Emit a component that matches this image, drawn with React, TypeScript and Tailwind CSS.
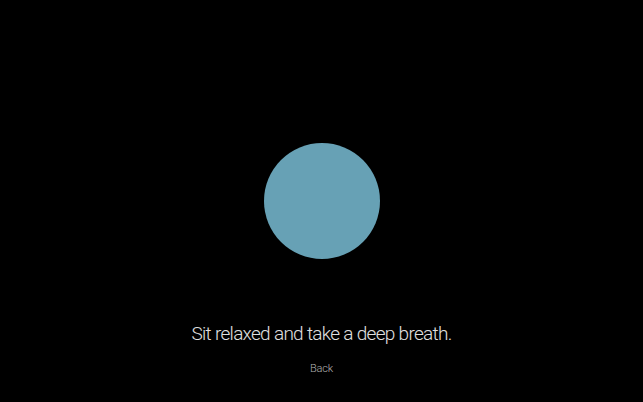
export default function App() {
  return (
    <div
      className="flex h-[402px] w-full flex-col items-center bg-black pt-[143px]"
      style={{ fontFamily: "Roboto, 'Noto Sans', sans-serif" }}
    >
      <div className="h-[116px] w-[116px] rounded-full bg-[#67a1b5]" />
      <p className="mt-[61px] text-[19px] leading-[28px] font-light tracking-[-0.7px] text-[#e0e0e0]">
        Sit relaxed and take a deep breath.
      </p>
      <button className="mt-[13px] text-[11px] leading-[16px] font-light tracking-[-0.2px] text-[#b0b0b0]">
        Back
      </button>
    </div>
  );
}
